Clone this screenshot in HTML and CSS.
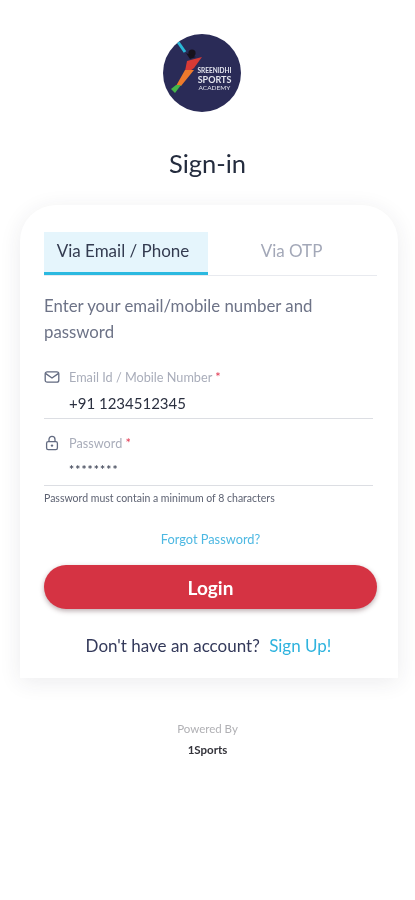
FILE: index.html
```html
<!DOCTYPE html>
<html lang="en">

<head>
    <meta charset="utf-8">
    <meta name="viewport" content="width=device-width, initial-scale=1">
    <title>Sign-in</title>
    <link rel="stylesheet" href="styles.css">
</head>

<body>
    <div class="logo-wrap">
        <div class="logo">
            <svg class="logo-mark" width="78" height="78" viewBox="0 0 78 78">
                <path d="M15 8 L22 18" stroke="#2ab8d8" stroke-width="3" fill="none" />
                <circle cx="29" cy="19" r="3.6" fill="#16121c" />
                <path d="M23 19 L27 25 L33 23 Z" fill="#16121c" />
                <path d="M24 27 L39 23 L31 34 L27 37 L22 37 Z" fill="#d93a35" />
                <path d="M22 36 L31 36 L18 52 L13 52 Z" fill="#ee7a2c" />
                <path d="M13 51 L18 51 L12 59 L8 55 Z" fill="#45b648" />
            </svg>
            <div class="logo-text">
                <span class="logo-line">SREENIDHI</span>
                <span class="logo-line logo-big">SPORTS</span>
                <span class="logo-line logo-small">ACADEMY</span>
            </div>
        </div>
    </div>

    <h1 class="page-title">Sign-in</h1>

    <div class="card">
        <div class="tabs">
            <div class="tab tab-active">Via Email / Phone</div>
            <div class="tab">Via OTP</div>
        </div>

        <p class="intro">Enter your email/mobile number and password</p>

        <div class="field field-email">
            <div class="field-label">
                <svg class="field-icon" width="16" height="14" viewBox="0 0 16 14" fill="none" stroke="#626a80" stroke-width="1.3">
                    <rect x="1.2" y="1.8" width="13.6" height="10.4" rx="2" />
                    <path d="M1.8 3.6 L8 8 L14.2 3.6" />
                </svg>
                <span>Email Id / Mobile Number <b class="req">*</b></span>
            </div>
            <div class="field-value">+91 1234512345</div>
        </div>

        <div class="field field-pass">
            <div class="field-label">
                <svg class="field-icon" width="16" height="16" viewBox="0 0 16 16" fill="none" stroke="#626a80" stroke-width="1.3">
                    <rect x="2.6" y="6.6" width="10.8" height="8" rx="1.6" />
                    <path d="M5 6.6 V4.4 a3 3 0 0 1 6 0 V6.6" />
                    <circle cx="8" cy="10.6" r="1.2" fill="#626a80" stroke="none" />
                </svg>
                <span>Password <b class="req">*</b></span>
            </div>
            <div class="field-value field-dots">********</div>
        </div>

        <p class="hint">Password must contain a minimum of 8 characters</p>

        <a class="forgot" href="#">Forgot Password?</a>

        <button class="btn-login" type="button">Login</button>

        <p class="signup">Don't have an account? <a href="#">Sign Up!</a></p>
    </div>

    <div class="footer">
        <div class="powered">Powered By</div>
        <div class="brand">1Sports</div>
    </div>
</body>

</html>
```

FILE: styles.css
```css
html,
body {
    margin: 0;
    padding: 0;
    background: #fff;
}

body {
    width: 415px;
    height: 900px;
    overflow: hidden;
    font-family: Lato, "Liberation Sans", sans-serif;
    color: #2b3245;
    filter: blur(0.4px);
}

.logo-wrap {
    display: flex;
    justify-content: center;
    padding: 34px 12px 0 0;
}

.logo {
    position: relative;
    width: 78px;
    height: 78px;
    border-radius: 50%;
    background: #2a2b57;
    overflow: hidden;
}

.logo-mark {
    display: block;
}

.logo-text {
    position: absolute;
    left: 33px;
    top: 33px;
    width: 38px;
    display: flex;
    flex-direction: column;
    align-items: center;
    color: #e4e5ee;
    font-size: 6.5px;
    font-weight: 700;
    line-height: 8px;
}

.logo-line {
    white-space: nowrap;
}

.logo-big {
    font-size: 9px;
    line-height: 9px;
}

.logo-small {
    font-size: 6.5px;
    font-weight: 400;
}

.page-title {
    margin: 35px 0 0;
    text-align: center;
    font-size: 25.5px;
    line-height: 32px;
    font-weight: 400;
    color: #242c3e;
}

.card {
    width: 378px;
    height: 473px;
    margin: 26px 0 0 20px;
    padding: 27px 21px 0 24px;
    box-sizing: border-box;
    background: #fff;
    border-radius: 36px 36px 0 0;
    box-shadow: 0 4px 22px rgba(40, 45, 70, 0.09);
}

.tabs {
    display: flex;
    height: 43px;
    border-bottom: 1px solid #e8eaef;
}

.tab {
    width: 164px;
    height: 43px;
    padding-right: 2px;
    line-height: 38px;
    text-align: center;
    font-size: 17px;
    color: #a3a8b8;
    box-sizing: border-box;
}

.tab:last-child {
    flex: 1;
}

.tab-active {
    padding-right: 6px;
    background: #e5f5fc;
    border-bottom: 3px solid #2bb9e0;
    color: #333b50;
}

.intro {
    margin: 17px 0 0;
    font-size: 16.8px;
    line-height: 26px;
    color: #6d7387;
}

.field {
    border-bottom: 1px solid #dcdee3;
    margin-right: 4px;
}

.field-email {
    height: 49px;
    margin-top: 24px;
}

.field-pass {
    height: 50px;
    margin-top: 16px;
}

.field-label {
    display: flex;
    align-items: center;
    gap: 9px;
    height: 16px;
    font-size: 12.7px;
    color: #a9adba;
}

.req {
    color: #e0304a;
    font-weight: 400;
}

.field-value {
    margin: 8px 0 0 25px;
    font-size: 15px;
    line-height: 20px;
    color: #2b3040;
}

.field-dots {
    margin-top: 9px;
    font-size: 12px;
    font-weight: 700;
    letter-spacing: 1.1px;
    color: #454b5c;
}

.hint {
    margin: 6px 0 0;
    font-size: 10.5px;
    line-height: 12px;
    color: #5d6272;
}

.forgot {
    display: block;
    margin-top: 27px;
    text-align: center;
    font-size: 12.8px;
    line-height: 16px;
    color: #4db8e2;
    text-decoration: none;
}

.btn-login {
    display: block;
    width: 333px;
    height: 44px;
    margin-top: 18px;
    border: 0;
    border-radius: 22px;
    background: #d53343;
    box-shadow: 0 2px 5px rgba(60, 20, 30, 0.35);
    color: #fff;
    font-family: inherit;
    font-size: 19px;
    font-weight: 700;
}

.signup {
    margin: 26px 0 0;
    padding-right: 4px;
    text-align: center;
    font-size: 17px;
    line-height: 22px;
    color: #33395a;
}

.signup a {
    margin-left: 5px;
    color: #2fb3de;
    text-decoration: none;
}

.footer {
    margin-top: 44px;
    text-align: center;
}

.powered {
    font-size: 11.5px;
    line-height: 14px;
    color: #b0b0b4;
}

.brand {
    margin-top: 7px;
    font-size: 11.5px;
    font-weight: 700;
    line-height: 14px;
    color: #33333a;
}
```
